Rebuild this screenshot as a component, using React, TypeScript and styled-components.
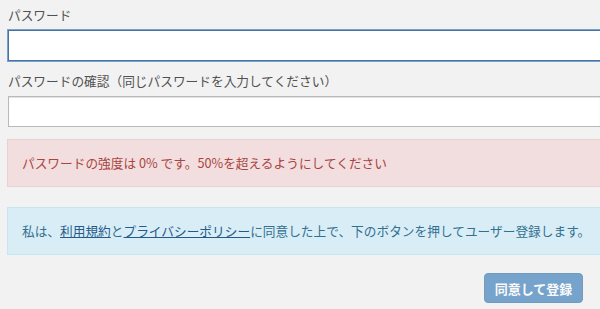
import styled, { createGlobalStyle } from "styled-components"

const GlobalStyle = createGlobalStyle`
  html, body {
    margin: 0;
    padding: 0;
    background: #f2f2f2;
    overflow: hidden;
  }
  body {
    font-family: "Noto Sans CJK JP", "Noto Sans", sans-serif;
    font-size: 12.7px;
    color: #555;
  }
`

// the screenshot is a crop of a wider column: fields and alerts run to the right edge
const Page = styled.div`
  width: 600px;
  padding-top: 5px;
  box-sizing: border-box;
`

const Form = styled.form`
  display: flex;
  flex-direction: column;
  padding-left: 8px;
`

const Field = styled.div`
  display: flex;
  flex-direction: column;
  margin-bottom: 10px;
`

const Label = styled.label`
  line-height: 20px;
  margin-bottom: 5px;
  color: #505050;
`

const Input = styled.input<{ $focused?: boolean }>`
  box-sizing: border-box;
  width: 100%;
  height: 31px;
  padding: 4px 5px;
  font: inherit;
  background: #fff;
  outline: none;
  border: 1px solid ${p => (p.$focused ? "#46739f" : "#b9b9b9")};
  border-right: 0;
  box-shadow: ${p => (p.$focused ? "0 0 0 1px #7aa1c9" : "inset 0 1px 1px rgba(0, 0, 0, 0.12)")};
`

const Alert = styled.div<{ $kind: "danger" | "info" }>`
  box-sizing: border-box;
  width: calc(100% + 1px);
  margin: 2px 0 18px -1px;
  padding: 13px 14px;
  line-height: 20px;
  border: 1px solid ${p => (p.$kind === "danger" ? "#ebd0d3" : "#c6e6f1")};
  border-right: 0;
  background: ${p => (p.$kind === "danger" ? "#f2dede" : "#d9edf7")};
  color: ${p => (p.$kind === "danger" ? "#a94442" : "#31708f")};
  white-space: nowrap;
`

const Link = styled.a`
  color: #245a8a;
  text-decoration: underline;
`

const ButtonRow = styled.div`
  display: flex;
  justify-content: flex-end;
  padding-right: 17px;
`

const SubmitButton = styled.button`
  height: 30px;
  width: 99px;
  padding: 0;
  font: inherit;
  font-size: 13px;
  font-weight: bold;
  color: #fff;
  background: #337ab7;
  border: 1px solid #2e6da4;
  border-radius: 4px;
  opacity: 0.65;
  cursor: not-allowed;
`

const App = () => {
  return (
    <Page>
      <GlobalStyle />
      <Form onSubmit={e => e.preventDefault()}>
        <Field>
          <Label>パスワード</Label>
          <Input type="password" $focused />
        </Field>
        <Field>
          <Label>パスワードの確認（同じパスワードを入力してください）</Label>
          <Input type="password" />
        </Field>

        <Alert $kind="danger">パスワードの強度は 0% です。50%を超えるようにしてください</Alert>

        <Alert $kind="info">
          私は、<Link href="#">利用規約</Link>と<Link href="#">プライバシーポリシー</Link>に同意した上で、下のボタンを押してユーザー登録します。
        </Alert>

        <ButtonRow>
          <SubmitButton type="submit" disabled>同意して登録</SubmitButton>
        </ButtonRow>
      </Form>
    </Page>
  )
}

export default App
